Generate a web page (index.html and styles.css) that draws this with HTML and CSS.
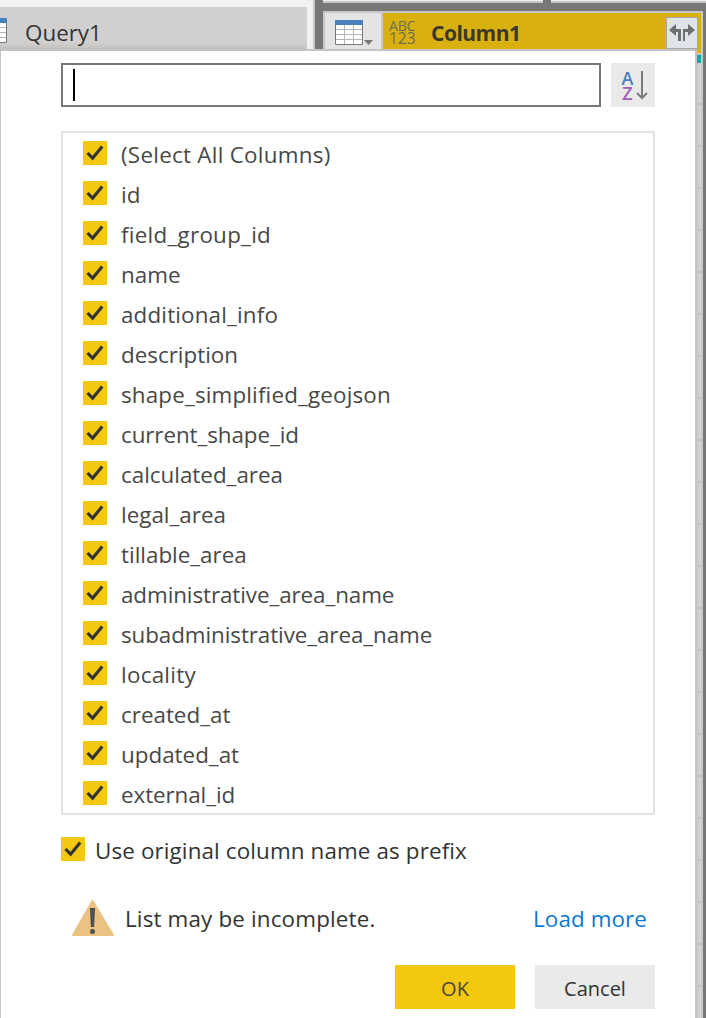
FILE: index.html
```html
<!DOCTYPE html>
<html lang="en"><head><meta charset="utf-8"><title>Expand columns</title><link rel="stylesheet" href="styles.css"></head>
<body>
<svg class="defs"><symbol id="tick" viewBox="0 0 24 24"><path d="M4.500 12 9.600 17.200 19.200 5.400" fill="none" stroke="#333" stroke-width="3.1"/></symbol></svg>
<div class="window">
  <header class="workspace">
    <div class="queries"><div class="query">
      <svg class="query-icon" width="7" height="26" viewBox="0 0 7 26"><path fill="#fff" d="M0 1h6v23H0z"/><path fill="#4a80b9" d="M0 0h7v5H0z"/><path d="M0 9.5h6M0 14.5h6M0 19.5h6" stroke="#b5b5b5"/><path d="M0 24.5h6.5V5" fill="none" stroke="#777"/></svg>
      <span>Query1</span></div></div>
    <div class="grid">
      <div class="formula-edge"><i></i><i></i></div>
      <div class="grid-head">
        <div class="table-menu"><svg width="40" height="28" viewBox="0 0 40 28"><path fill="#fff" d="M0 0h28v25H0z"/><path d="M9.5 5v20M18.5 5v20M0 9.5h28M0 14.5h28M0 19.5h28" stroke="#b5b5b5"/><path d="M.5 5v19.5h27V5" fill="none" stroke="#777"/><path fill="#4a80b9" d="M0 0h28v5H0z"/><path fill="#777" d="M29 20h9l-4.500 5z"/></svg></div>
        <div class="column"><div class="any-type"><span>ABC</span><span>123</span></div><strong>Column1</strong>
          <button class="expand" aria-label="Expand"><svg width="26" height="18" viewBox="0 0 26 18"><path fill="#707070" d="M0 6 7 0v5h5v12h-3V8H7v4zM26 6l-7-6v5h-5v12h2V8h3v4z"/></svg></button></div>
      </div>
      <div class="quality"></div><div class="cells"></div>
    </div>
  </header>
  <main class="popup">
    <div class="search-row"><div class="search"><i class="caret"></i></div>
      <button class="sort" aria-label="Sort"><span class="letters"><span class="sort-a">A</span><span class="sort-z">Z</span></span><svg width="12" height="30" viewBox="0 0 12 30"><path d="M6 0v27M1 22l5 5 5-5" fill="none" stroke="#7b7b7b" stroke-width="2"/></svg></button></div>
    <ul class="columns">
      <li><svg class="check"><use href="#tick"/></svg><span class="loose">(Select All Columns)</span></li>
      <li><svg class="check"><use href="#tick"/></svg><span>id</span></li>
      <li><svg class="check"><use href="#tick"/></svg><span class="loose">field_group_id</span></li>
      <li><svg class="check"><use href="#tick"/></svg><span>name</span></li>
      <li><svg class="check"><use href="#tick"/></svg><span class="open">additional_info</span></li>
      <li><svg class="check"><use href="#tick"/></svg><span>description</span></li>
      <li><svg class="check"><use href="#tick"/></svg><span class="open">shape_simplified_geojson</span></li>
      <li><svg class="check"><use href="#tick"/></svg><span class="tight">current_shape_id</span></li>
      <li><svg class="check"><use href="#tick"/></svg><span>calculated_area</span></li>
      <li><svg class="check"><use href="#tick"/></svg><span>legal_area</span></li>
      <li><svg class="check"><use href="#tick"/></svg><span>tillable_area</span></li>
      <li><svg class="check"><use href="#tick"/></svg><span class="tight">administrative_area_name</span></li>
      <li><svg class="check"><use href="#tick"/></svg><span class="tight">subadministrative_area_name</span></li>
      <li><svg class="check"><use href="#tick"/></svg><span class="loose">locality</span></li>
      <li><svg class="check"><use href="#tick"/></svg><span>created_at</span></li>
      <li><svg class="check"><use href="#tick"/></svg><span>updated_at</span></li>
      <li><svg class="check"><use href="#tick"/></svg><span class="tight">external_id</span></li>
    </ul>
    <div class="prefix"><svg class="check"><use href="#tick"/></svg><span>Use original column name as prefix</span></div>
    <div class="notice"><svg width="44" height="38" viewBox="0 0 44 38"><path fill="#eac282" stroke="#eac282" stroke-width="2" stroke-linejoin="round" d="M21.500 2 2 36h40z"/><path fill="#505050" d="M18.900 9h5.200l-1 19h-3.200z"/><circle cx="21.500" cy="32.500" r="2.500" fill="#505050"/></svg><span class="open">List may be incomplete.</span><a class="load">Load more</a></div>
    <div class="actions"><button class="ok">OK</button><button class="cancel">Cancel</button></div>
  </main>
</div>
</body></html>
```
FILE: styles.css
```css
* { box-sizing: border-box; }
body { margin: 0; font-family: "Open Sans", "Noto Sans", sans-serif; font-size: 22.4px; color: #333; }
button { border: 0; padding: 0; font: inherit; color: inherit; }
.defs { position: absolute; width: 0; height: 0; }
.window { position: relative; width: 706px; height: 1018px; overflow: hidden; background: #777; }
.workspace { display: flex; height: 1018px; }
.queries { width: 315px; padding-top: 7px; background: #f3f2f1; border-right: 2px solid #c8c8c8; }
.query { width: 307px; height: 60px; display: flex; background: linear-gradient(#d2d0ce 36px, #bebcbb 44px); color: #333; }
.query-icon { margin-top: 11px; }
.query span { margin: 9px 0 0 18px; line-height: 34px; }
.grid { width: 380px; margin-left: 8px; flex: none; border-right: 2px solid #c8c8c8; background: linear-gradient(90deg, #c8c8c8 374px, #d8d8d8 378px); }
.formula-edge { height: 11px; width: 383px; background: #777; display: flex; gap: 8px; }
.formula-edge i { height: 3px; width: 220px; background: #f3f2f1; border-bottom: 2px solid #c8c8c8; }
.formula-edge i:last-child { width: 155px; }
.grid-head { height: 42px; border: 2px solid #c8c8c8; border-right: 0; border-bottom: 0; display: flex; background: #c8c8c8; }
.table-menu { width: 56px; margin-right: 2px; padding: 7px 0 0 10px; background: #e4e4e4; }
.column { flex: 1; display: flex; background: #d9b10e; }
.any-type { display: flex; flex-direction: column; width: 30px; margin-left: 6px; padding-top: 7px; font-size: 14px; line-height: 12px; color: #6f6c51; }
.any-type span { letter-spacing: -.2px; }
.any-type span:last-child { font-size: 15.5px; line-height: 13px; letter-spacing: 0; }
.column strong { margin: 3px 0 0 12px; line-height: 34px; font-weight: 700; font-size: 21px; letter-spacing: -.5px; color: #3d3829; }
.expand { width: 32px; height: 32px; margin: 4px 3px 0 auto; border: 1px solid #a5a9af; background: #dfe3ea; display: grid; place-items: center; }
.quality { height: 10px; border-top: 2px solid #c8c8c8; background: #00b0a0; }
.cells { height: 955px; background: repeating-linear-gradient(transparent 0 40px, #c2c2c2 40px 42px); }
.popup { position: absolute; left: 0; top: 49px; width: 697px; height: 969px; padding: 12px 40px 0 60px; border: solid #c4c4c4; border-width: 2px 2px 0 1px; background: #fff; }
.search-row { display: flex; gap: 10px; }
.search { width: 540px; height: 44px; border: 2px solid #767879; padding: 4px 10px; }
.caret { display: block; width: 2px; height: 32px; background: #000; }
.sort { width: 44px; height: 44px; padding: 1px 0 0 3px; background: #eaeaea; display: flex; align-items: center; justify-content: center; gap: 2px; }
.letters { display: flex; flex-direction: column; width: 12px; font-size: 18px; font-weight: 600; line-height: 15px; text-align: center; }
.sort-a { color: #4a80bd; }
.sort-z { color: #9b5fb9; }
.columns { width: 594px; height: 684px; margin: 24px 0 0; padding: 0 20px; border: 2px solid #dfe3e6; list-style: none; overflow: hidden; }
.columns li { height: 40px; display: flex; color: #484848; }
.check { width: 24px; height: 24px; flex: none; background: #f2c811; }
.columns .check { margin-top: 8px; }
.columns span { margin-left: 14px; line-height: 44px; white-space: nowrap; }
.loose { letter-spacing: .27px; }
.open { letter-spacing: .16px; }
.tight { letter-spacing: -.08px; }
.prefix { display: flex; margin-top: 22px; height: 30px; }
.prefix span { margin-left: 10px; line-height: 27px; letter-spacing: .13px; white-space: nowrap; }
.notice { display: flex; height: 38px; margin: 32px 0 0 10px; }
.notice span { margin: 0 auto 0 10px; line-height: 39px; }
.load { margin-right: 8px; line-height: 39px; letter-spacing: .1px; color: #0b78d4; }
.actions { display: flex; justify-content: flex-end; gap: 20px; margin-top: 28px; }
.actions button { width: 120px; height: 44px; padding-top: 3px; font-size: 20px; background: #eaeaea; }
.actions .ok { background: #f2c811; color: #484838; }
```
